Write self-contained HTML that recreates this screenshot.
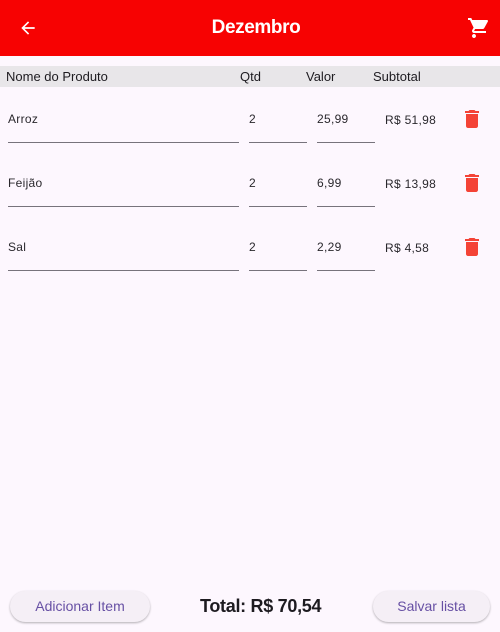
<!DOCTYPE html>
<html><head><style>
*{margin:0;padding:0;box-sizing:border-box}
body{width:500px;height:632px;background:#fdf7fe;font-family:"Liberation Sans",sans-serif;position:relative;overflow:hidden;color:#1d1b20}
.bar{position:absolute;left:0;top:0;width:500px;height:56px;background:#f70202}
.title{position:absolute;left:6px;width:500px;top:17px;text-align:center;color:#fff;font-size:19px;font-weight:bold;letter-spacing:-0.4px}
.hdr{position:absolute;top:66px;left:0;width:500px;height:21px;background:#e8e6e9;font-size:13px}
.hdr span{position:absolute;top:3px}
.t{position:absolute;font-size:12px;color:#2a282d;letter-spacing:0.3px}
.l{position:absolute;height:1px;background:#77737c}
.btn{position:absolute;top:591px;height:31px;border-radius:16px;background:#f5eff6;box-shadow:0 1px 2px rgba(0,0,0,.3);color:#6750a4;font-size:14px;text-align:center;line-height:31px}
</style></head><body>
<div class="bar"></div>
<svg style="position:absolute;left:18px;top:18px" width="20" height="20" viewBox="0 0 24 24"><path fill="#fff" d="M20 11H7.83l5.59-5.59L12 4l-8 8 8 8 1.41-1.41L7.83 13H20v-2z"/></svg>
<div class="title">Dezembro</div>
<svg style="position:absolute;left:467px;top:16px" width="24" height="24" viewBox="0 0 24 24"><path fill="#fff" d="M7 18c-1.1 0-2 .9-2 2s.9 2 2 2 2-.9 2-2-.9-2-2-2zM1 2v2h2l3.6 7.590-1.35 2.45c-.16.28-.25.61-.25.96 0 1.1.9 2 2 2h12v-2H7.42c-.14 0-.25-.11-.25-.25l.03-.12.9-1.63h7.45c.75 0 1.41-.41 1.750-1.03l3.58-6.49A1 1 0 0 0 20 4H5.21l-.94-2H1z"/></svg>
<div class="hdr"><span style="left:6px">Nome do Produto</span><span style="left:240px">Qtd</span><span style="left:306px">Valor</span><span style="left:373px">Subtotal</span></div>

<div class="t" style="left:8px;top:112px">Arroz</div><div class="t" style="left:249px;top:112px">2</div><div class="t" style="left:317px;top:112px">25,99</div><div class="t" style="left:385px;top:113px">R$ 51,98</div>
<div class="l" style="left:8px;width:231px;top:142px"></div><div class="l" style="left:249px;width:58px;top:142px"></div><div class="l" style="left:317px;width:58px;top:142px"></div>

<div class="t" style="left:8px;top:176px">Feijão</div><div class="t" style="left:249px;top:176px">2</div><div class="t" style="left:317px;top:176px">6,99</div><div class="t" style="left:385px;top:177px">R$ 13,98</div>
<div class="l" style="left:8px;width:231px;top:206px"></div><div class="l" style="left:249px;width:58px;top:206px"></div><div class="l" style="left:317px;width:58px;top:206px"></div>

<div class="t" style="left:8px;top:240px">Sal</div><div class="t" style="left:249px;top:240px">2</div><div class="t" style="left:317px;top:240px">2,29</div><div class="t" style="left:385px;top:241px">R$ 4,58</div>
<div class="l" style="left:8px;width:231px;top:270px"></div><div class="l" style="left:249px;width:58px;top:270px"></div><div class="l" style="left:317px;width:58px;top:270px"></div>

<svg style="position:absolute;left:460px;top:107px" width="24" height="24" viewBox="0 0 24 24"><path fill="#f44336" d="M6 19c0 1.1.9 2 2 2h8c1.1 0 2-.9 2-2V7H6v12zM19 4h-3.5l-1-1h-5l-1 1H5v2h14V4z"/></svg>
<svg style="position:absolute;left:460px;top:171px" width="24" height="24" viewBox="0 0 24 24"><path fill="#f44336" d="M6 19c0 1.1.9 2 2 2h8c1.1 0 2-.9 2-2V7H6v12zM19 4h-3.5l-1-1h-5l-1 1H5v2h14V4z"/></svg>
<svg style="position:absolute;left:460px;top:235px" width="24" height="24" viewBox="0 0 24 24"><path fill="#f44336" d="M6 19c0 1.1.9 2 2 2h8c1.1 0 2-.9 2-2V7H6v12zM19 4h-3.5l-1-1h-5l-1 1H5v2h14V4z"/></svg>

<div class="btn" style="left:10px;width:140px">Adicionar Item</div>
<div style="position:absolute;left:200px;top:596px;font-size:18px;font-weight:bold;color:#1d1b20;letter-spacing:-0.3px">Total: R$ 70,54</div>
<div class="btn" style="left:373px;width:117px">Salvar lista</div>
</body></html>
